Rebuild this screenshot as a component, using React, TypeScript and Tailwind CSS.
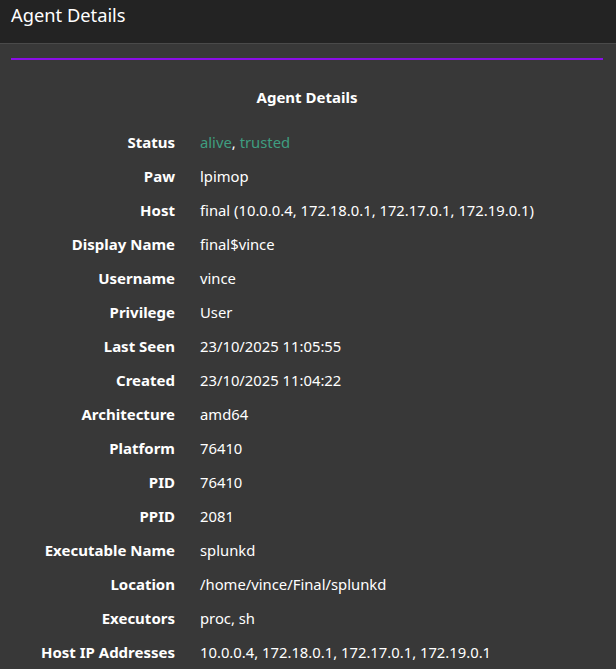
const rows: [string, string][] = [
  ['Paw', 'lpimop'],
  ['Host', 'final (10.0.0.4, 172.18.0.1, 172.17.0.1, 172.19.0.1)'],
  ['Display Name', 'final$vince'],
  ['Username', 'vince'],
  ['Privilege', 'User'],
  ['Last Seen', '23/10/2025 11:05:55'],
  ['Created', '23/10/2025 11:04:22'],
  ['Architecture', 'amd64'],
  ['Platform', '76410'],
  ['PID', '76410'],
  ['PPID', '2081'],
  ['Executable Name', 'splunkd'],
  ['Location', '/home/vince/Final/splunkd'],
  ['Executors', 'proc, sh'],
  ['Host IP Addresses', '10.0.0.4, 172.18.0.1, 172.17.0.1, 172.19.0.1']
];

export default function App() {
  return (
    <div className="min-h-[669px] bg-[#383838] text-white font-['Noto_Sans',sans-serif]">
      <div className="h-[44px] bg-[#232323] border-b border-[#4a4a4a] px-[11px] pt-[3px]">
        <h1 className="text-[18.3px] leading-[24px]">Agent Details</h1>
      </div>
      <div className="ml-[11px] mr-[13px] mt-[14px] border-t-2 border-[#8a0ee6]">
        <h2 className="mt-[27px] text-center text-[15px] leading-[20px] font-bold">Agent Details</h2>
        <div className="mt-[18px] text-[15px]">
          <div className="flex h-[34px] items-center">
            <div className="w-[164px] text-right font-bold">Status</div>
            <div className="ml-[25px] text-[14.8px] text-[#3f9e80]">alive<span className="text-white">,</span> trusted</div>
          </div>
          {rows.map(([label, value]) => (
            <div key={label} className="flex h-[34px] items-center">
              <div className="w-[164px] text-right font-bold">{label}</div>
              <div className="ml-[25px] text-[14.8px]">{value}</div>
            </div>
          ))}
        </div>
      </div>
    </div>
  );
}
